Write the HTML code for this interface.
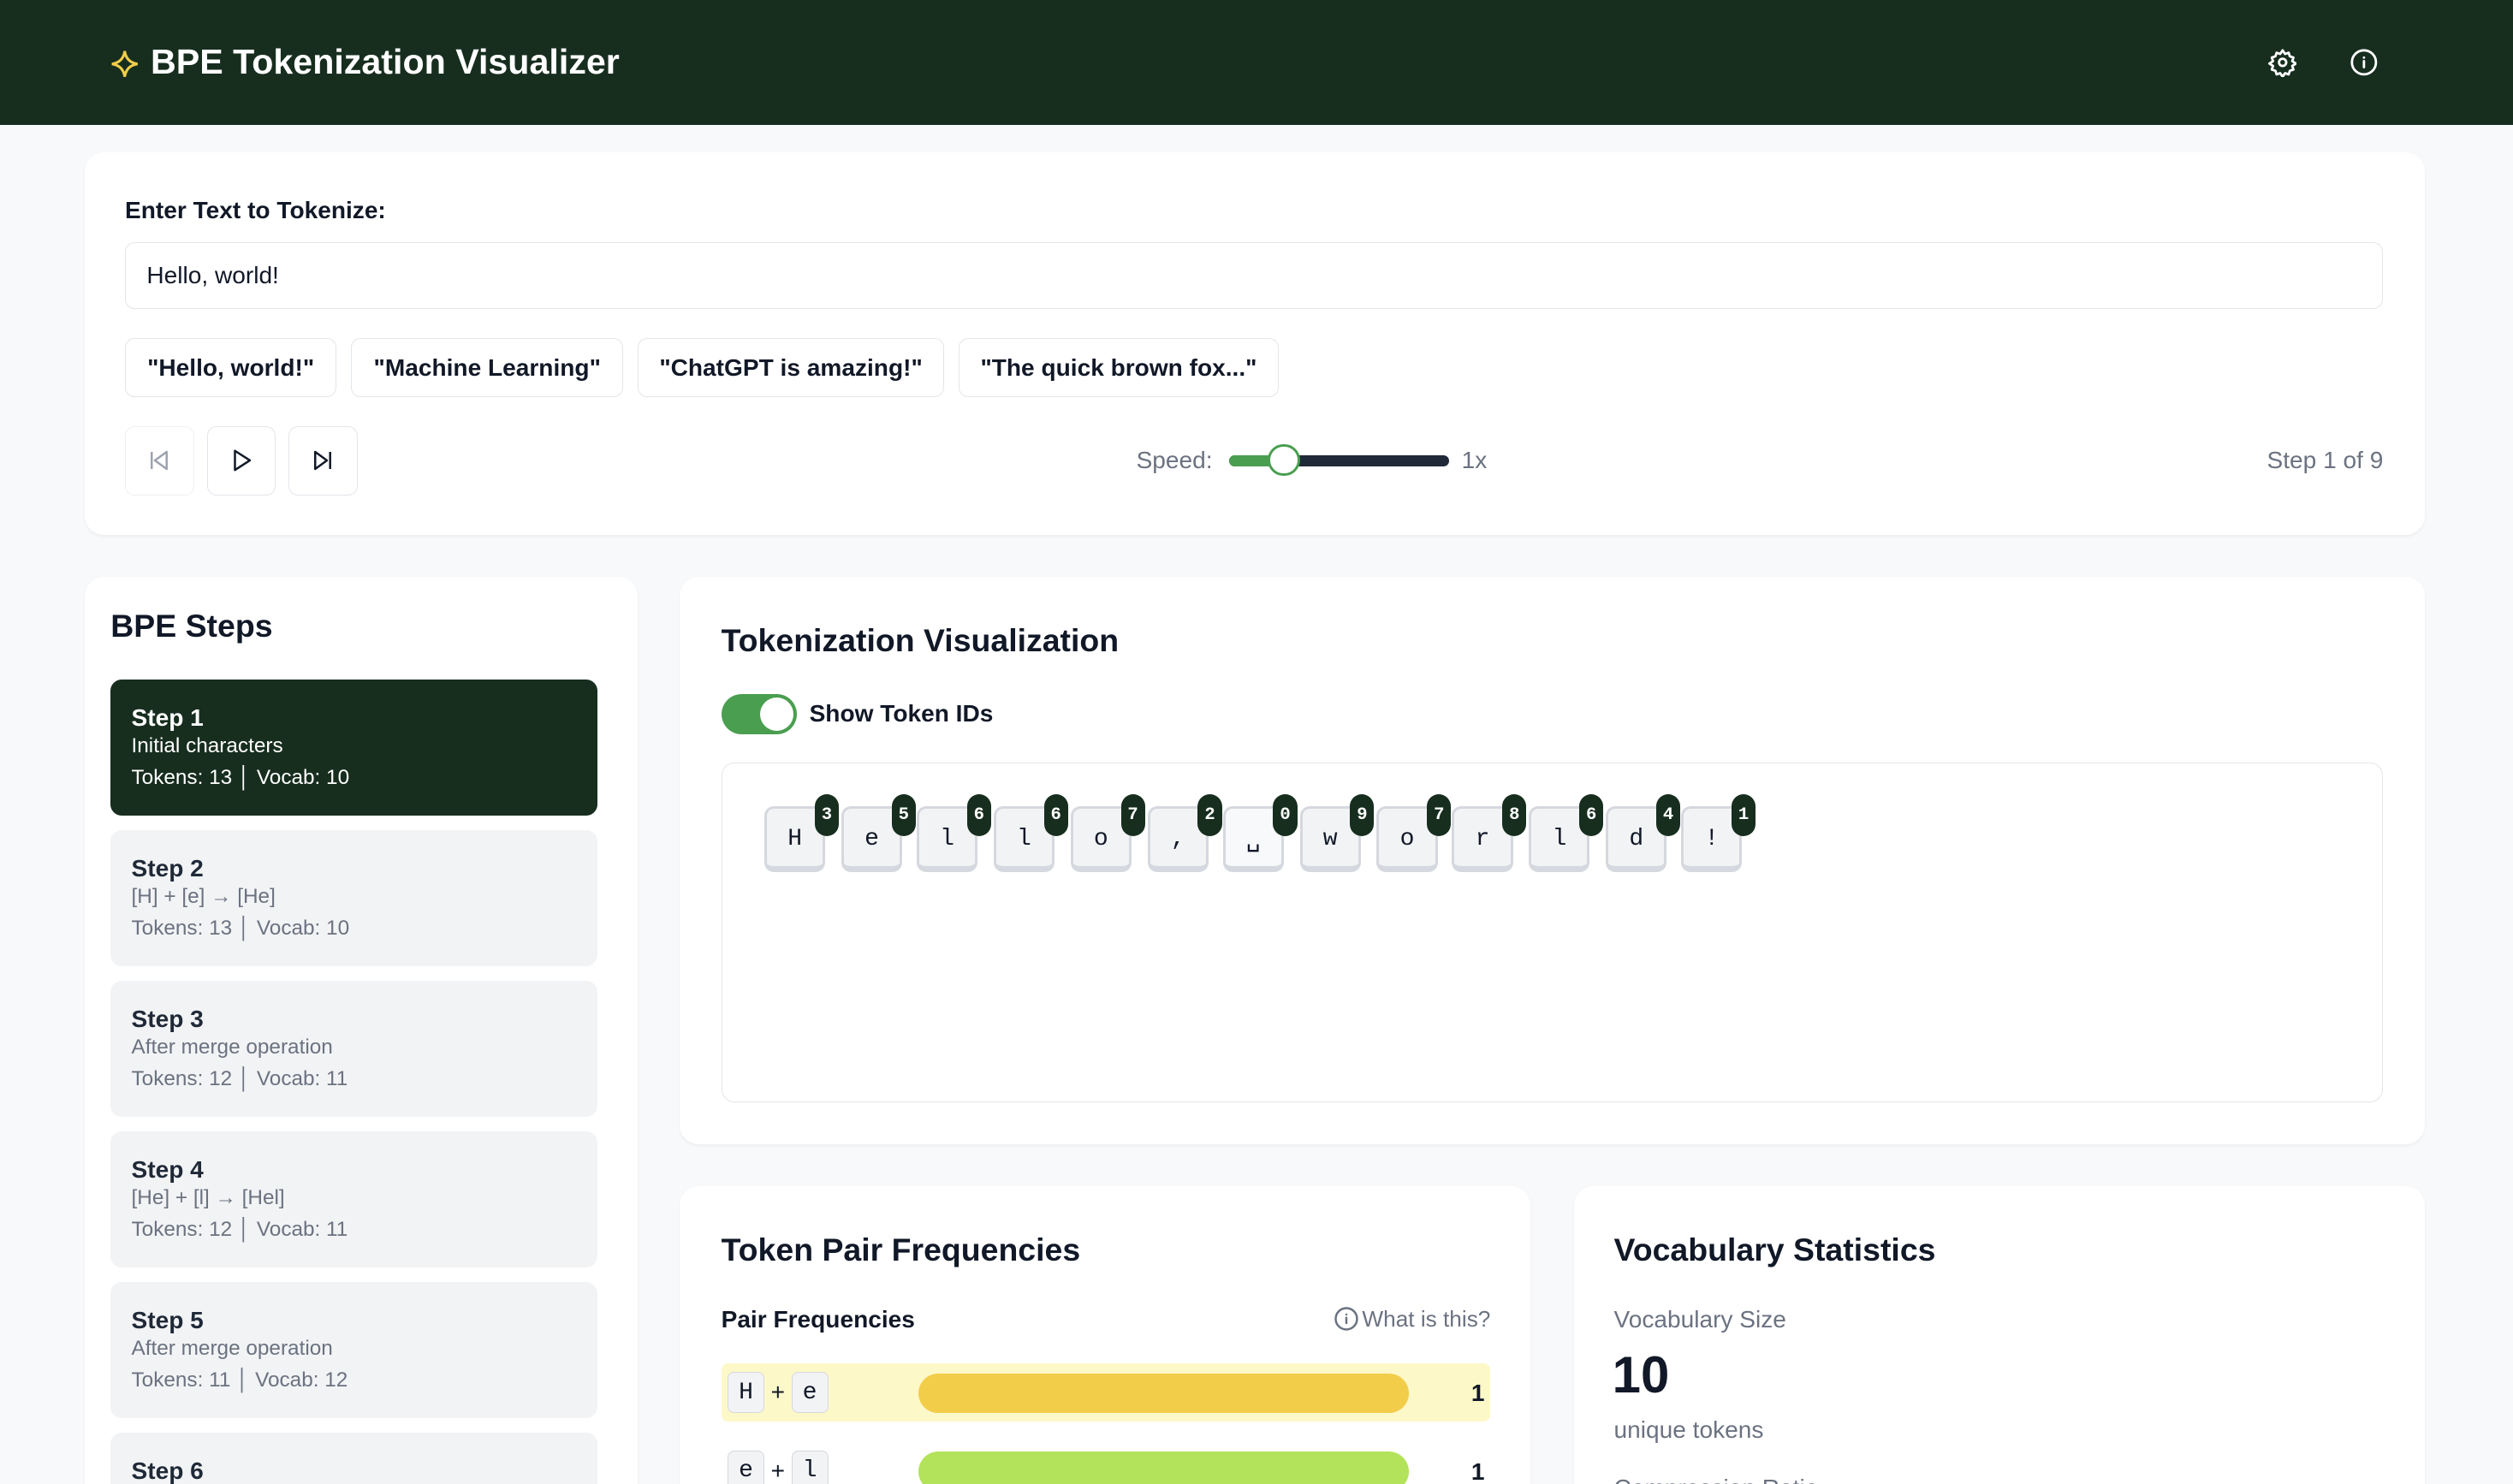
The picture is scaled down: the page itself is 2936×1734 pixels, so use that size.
<!DOCTYPE html>
<html><head><meta charset="utf-8"><style>
*{box-sizing:border-box;margin:0;padding:0}
html,body{width:2936px;height:1734px;overflow:hidden;background:#f8f9fb}
#w{zoom:1.87245;width:1568px;height:926px;position:relative;overflow:hidden;font-family:"Liberation Sans",sans-serif;color:#111827;background:#f8f9fb}
.a{position:absolute}
.card{position:absolute;background:#fff;border-radius:12px;box-shadow:0 1px 2px rgba(0,0,0,.05)}
.t{position:absolute;white-space:nowrap;line-height:1}
.chip{position:absolute;top:211px;height:37px;border:1px solid #e2e5ea;border-radius:6px;font-size:15px;font-weight:bold;display:flex;align-items:center;justify-content:center;color:#111827}
.btn{position:absolute;top:266px;width:43px;height:43px;border:1px solid #e2e5ea;border-radius:6px;display:flex;align-items:center;justify-content:center}
.step{position:absolute;left:69px;width:304px;height:85px;border-radius:7px;background:#f2f3f5;padding:15px 13px}
.step b{display:block;font-size:15px;font-weight:bold;color:#1f2937;line-height:18px}
.step span{display:block;font-size:13px;color:#6b7280;line-height:19px}
.step.on{background:#172e1f}
.step.on b,.step.on span{color:#fff}
.tok{position:absolute;top:503px;width:38px;height:41px;background:#f2f3f5;border:2px solid #d5d8de;border-bottom-width:4px;border-radius:6px;font-family:"Liberation Mono",monospace;font-size:15px;display:flex;align-items:center;justify-content:center;padding-top:2px}
.bd{position:absolute;top:-9px;right:-10px;width:15px;height:26px;border-radius:8px;background:#172e1f;color:#fff;font-family:"Liberation Mono",monospace;font-size:11px;font-weight:bold;display:flex;align-items:center;justify-content:center}
.mt{display:inline-flex;width:23px;height:26px;border:1px solid #d5d8de;border-radius:4px;background:#f2f3f5;font-family:"Liberation Mono",monospace;font-size:15px;align-items:center;justify-content:center}
</style></head><body><div id="w">
<div class="a" style="left:0;top:0;width:1568px;height:78px;background:#172e1f"></div>
<svg class="a" style="left:68px;top:30px" width="20" height="20" viewBox="0 0 20 20"><path d="M10 2 Q11 9 18 10 Q11 11 10 18 Q9 11 2 10 Q9 9 10 2Z" fill="none" stroke="#f2cd4a" stroke-width="1.6"/></svg>
<div class="t" style="left:94px;top:28px;font-size:22px;font-weight:bold;color:#fff">BPE Tokenization Visualizer</div>
<svg class="a" style="left:1415px;top:30px" width="18" height="18" viewBox="0 0 24 24" fill="none" stroke="#fff" stroke-width="2"><circle cx="12" cy="12" r="3"/><path d="M12 2l2 3 3-1 1 3 3 1-1 3 3 2-3 2 1 3-3 1-1 3-3-1-2 3-2-3-3 1-1-3-3-1 1-3-3-2 3-2-1-3 3-1 1-3 3 1z" stroke-linejoin="round"/></svg>
<svg class="a" style="left:1466px;top:30px" width="18" height="18" viewBox="0 0 24 24" fill="none" stroke="#fff" stroke-width="2"><circle cx="12" cy="12" r="10"/><path d="M12 16v-5M12 8h.01" stroke-linecap="round"/></svg>

<div class="card" style="left:53px;top:95px;width:1460px;height:239px"></div>
<div class="t" style="left:78px;top:124px;font-size:15px;font-weight:bold">Enter Text to Tokenize:</div>
<div class="a" style="left:78px;top:151px;width:1409px;height:42px;border:1px solid #e2e5ea;border-radius:6px;font-size:15px;padding:13px 13px;line-height:15px">Hello, world!</div>
<div class="chip" style="left:78px;width:132px">"Hello, world!"</div>
<div class="chip" style="left:219px;width:170px">"Machine Learning"</div>
<div class="chip" style="left:398px;width:191px">"ChatGPT is amazing!"</div>
<div class="chip" style="left:598px;width:200px">"The quick brown fox..."</div>
<div class="btn" style="left:78px;border-color:#eef0f3"><svg width="16" height="16" viewBox="0 0 24 24" fill="none" stroke="#9ca3af" stroke-width="2"><path d="M5 4v16M19 4L8 12l11 8z" stroke-linejoin="round"/></svg></div>
<div class="btn" style="left:129px"><svg width="16" height="16" viewBox="0 0 24 24" fill="none" stroke="#111827" stroke-width="2"><path d="M6 3l14 9-14 9z" stroke-linejoin="round"/></svg></div>
<div class="btn" style="left:180px"><svg width="16" height="16" viewBox="0 0 24 24" fill="none" stroke="#111827" stroke-width="2"><path d="M19 4v16M5 4l11 8-11 8z" stroke-linejoin="round"/></svg></div>
<div class="t" style="left:709px;top:280px;font-size:15px;color:#6b7280">Speed:</div>
<div class="a" style="left:767px;top:284px;width:137px;height:7px;border-radius:4px;background:#1f2937"></div>
<div class="a" style="left:767px;top:284px;width:34px;height:7px;border-radius:4px 0 0 4px;background:#4a9e50"></div>
<div class="a" style="left:791px;top:277px;width:20px;height:20px;border-radius:50%;background:#fff;border:2px solid #4a9e50"></div>
<div class="t" style="left:912px;top:280px;font-size:15px;color:#6b7280">1x</div>
<div class="t" style="right:81px;top:280px;font-size:15px;color:#6b7280">Step 1 of 9</div>

<div class="card" style="left:53px;top:360px;width:345px;height:600px"></div>
<div class="t" style="left:69px;top:381px;font-size:20px;font-weight:bold">BPE Steps</div>
<div class="step on" style="top:424px"><b>Step 1</b><span style="line-height:17px">Initial characters</span><span style="margin-top:2px">Tokens: 13 │ Vocab: 10</span></div>
<div class="step" style="top:518px"><b>Step 2</b><span style="line-height:17px">[H] + [e] → [He]</span><span style="margin-top:2px">Tokens: 13 │ Vocab: 10</span></div>
<div class="step" style="top:612px"><b>Step 3</b><span style="line-height:17px">After merge operation</span><span style="margin-top:2px">Tokens: 12 │ Vocab: 11</span></div>
<div class="step" style="top:706px"><b>Step 4</b><span style="line-height:17px">[He] + [l] → [Hel]</span><span style="margin-top:2px">Tokens: 12 │ Vocab: 11</span></div>
<div class="step" style="top:800px"><b>Step 5</b><span style="line-height:17px">After merge operation</span><span style="margin-top:2px">Tokens: 11 │ Vocab: 12</span></div>
<div class="step" style="top:894px"><b>Step 6</b></div>

<div class="card" style="left:424px;top:360px;width:1089px;height:354px"></div>
<div class="t" style="left:450px;top:390px;font-size:20px;font-weight:bold">Tokenization Visualization</div>
<div class="a" style="left:450px;top:433px;width:47px;height:25px;border-radius:13px;background:#4a9e50"></div>
<div class="a" style="left:474px;top:435px;width:21px;height:21px;border-radius:50%;background:#fff"></div>
<div class="t" style="left:505px;top:438px;font-size:15px;font-weight:bold">Show Token IDs</div>
<div class="a" style="left:450px;top:476px;width:1037px;height:212px;border:1px solid #e2e5ea;border-radius:8px"></div>
<div class="tok" style="left:477px">H<div class="bd">3</div></div>
<div class="tok" style="left:525px">e<div class="bd">5</div></div>
<div class="tok" style="left:572px">l<div class="bd">6</div></div>
<div class="tok" style="left:620px">l<div class="bd">6</div></div>
<div class="tok" style="left:668px">o<div class="bd">7</div></div>
<div class="tok" style="left:716px">,<div class="bd">2</div></div>
<div class="tok" style="left:763px;background:#f8f9fb">␣<div class="bd">0</div></div>
<div class="tok" style="left:811px">w<div class="bd">9</div></div>
<div class="tok" style="left:859px">o<div class="bd">7</div></div>
<div class="tok" style="left:906px">r<div class="bd">8</div></div>
<div class="tok" style="left:954px">l<div class="bd">6</div></div>
<div class="tok" style="left:1002px">d<div class="bd">4</div></div>
<div class="tok" style="left:1049px">!<div class="bd">1</div></div>

<div class="card" style="left:424px;top:740px;width:531px;height:300px"></div>
<div class="t" style="left:450px;top:770px;font-size:20px;font-weight:bold">Token Pair Frequencies</div>
<div class="t" style="left:450px;top:816px;font-size:15px;font-weight:bold">Pair Frequencies</div>
<svg class="a" style="left:832px;top:815px" width="16" height="16" viewBox="0 0 24 24" fill="none" stroke="#6b7280" stroke-width="2"><circle cx="12" cy="12" r="10"/><path d="M12 16v-5M12 8h.01" stroke-linecap="round"/></svg>
<div class="t" style="right:638px;top:816px;font-size:14px;color:#6b7280">What is this?</div>
<div class="a" style="left:450px;top:851px;width:480px;height:36px;background:#fdf8c8;border-radius:4px"></div>
<div class="a" style="left:454px;top:856px;font-size:15px;display:flex;align-items:center;gap:4px"><span class="mt">H</span>+<span class="mt">e</span></div>
<div class="a" style="left:573px;top:857px;width:306px;height:25px;border-radius:13px;background:#f2cd4a"></div>
<div class="t" style="left:918px;top:862px;font-size:15px;font-weight:bold">1</div>
<div class="a" style="left:454px;top:905px;font-size:15px;display:flex;align-items:center;gap:4px"><span class="mt">e</span>+<span class="mt">l</span></div>
<div class="a" style="left:573px;top:906px;width:306px;height:25px;border-radius:13px;background:#b3e35a"></div>
<div class="t" style="left:918px;top:911px;font-size:15px;font-weight:bold">1</div>

<div class="card" style="left:982px;top:740px;width:531px;height:300px"></div>
<div class="t" style="left:1007px;top:770px;font-size:20px;font-weight:bold">Vocabulary Statistics</div>
<div class="t" style="left:1007px;top:816px;font-size:15px;color:#6b7280">Vocabulary Size</div>
<div class="t" style="left:1006px;top:842px;font-size:32px;font-weight:bold">10</div>
<div class="t" style="left:1007px;top:885px;font-size:15px;color:#6b7280">unique tokens</div>
<div class="t" style="left:1007px;top:921px;font-size:15px;color:#6b7280">Compression Ratio</div>
</div></body></html>
